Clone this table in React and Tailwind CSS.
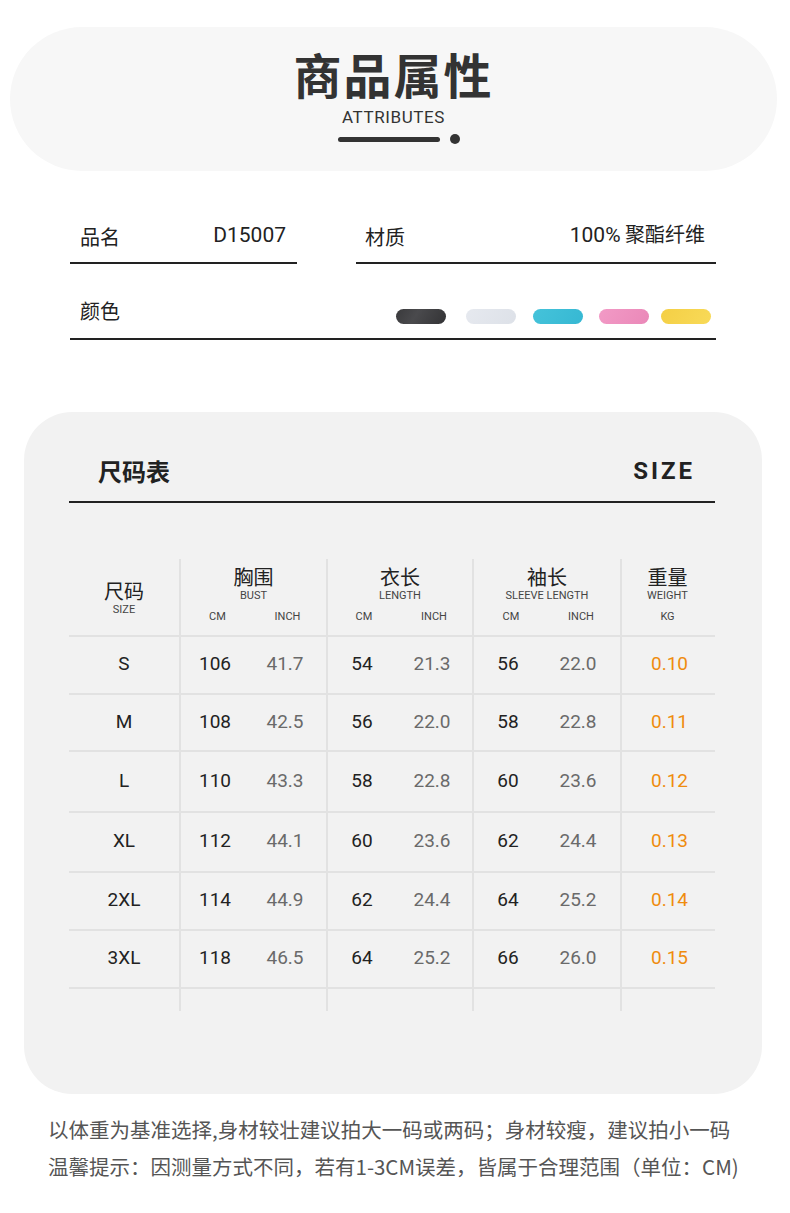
const cjk = { fontFamily: '"Noto Sans CJK SC", "Noto Sans", sans-serif' }
const din = { fontFamily: 'Roboto, "Noto Sans CJK SC", sans-serif' }

const rows = [
  { size: 'S', bust: ['106', '41.7'], length: ['54', '21.3'], sleeve: ['56', '22.0'], weight: '0.10', h: 'h-[58px]' },
  { size: 'M', bust: ['108', '42.5'], length: ['56', '22.0'], sleeve: ['58', '22.8'], weight: '0.11', h: 'h-[57px]' },
  { size: 'L', bust: ['110', '43.3'], length: ['58', '22.8'], sleeve: ['60', '23.6'], weight: '0.12', h: 'h-[61px]' },
  { size: 'XL', bust: ['112', '44.1'], length: ['60', '23.6'], sleeve: ['62', '24.4'], weight: '0.13', h: 'h-[60px]' },
  { size: '2XL', bust: ['114', '44.9'], length: ['62', '24.4'], sleeve: ['64', '25.2'], weight: '0.14', h: 'h-[58px]' },
  { size: '3XL', bust: ['118', '46.5'], length: ['64', '25.2'], sleeve: ['66', '26.0'], weight: '0.15', h: 'h-[58px]' },
]

// colour chips, with the left margin of each one
const swatches = [
  'ml-0 bg-[linear-gradient(120deg,#3a3a3c,#4a4a4d_40%,#333335)]',
  'ml-[20px] bg-[linear-gradient(120deg,#e6e9ef,#dde1e8)]',
  'ml-[17px] bg-[linear-gradient(120deg,#45c3da,#36b8d3)]',
  'ml-[16px] bg-[linear-gradient(120deg,#f29ac6,#ea88b8)]',
  'ml-[12px] bg-[linear-gradient(120deg,#f4cf45,#f8da58)]',
]

function Pair({ v }) {
  return (
    <div className="grid grid-cols-[68px_72px] items-center text-[19px]" style={din}>
      <div className="text-center text-[#222]">{v[0]}</div>
      <div className="text-center text-[#6a6a6a]">{v[1]}</div>
    </div>
  )
}

function HeadGroup({ cn, en }) {
  return (
    <div className="flex flex-col items-center pt-[6px]">
      <div className="text-[20px] leading-[24px] text-[#222]" style={cjk}>{cn}</div>
      <div className="text-[11px] leading-[14px] text-[#444]" style={din}>{en}</div>
      <div className="grid grid-cols-[68px_72px] mt-[6px] text-[11px] text-[#444]" style={din}>
        <div className="text-center">CM</div>
        <div className="text-center">INCH</div>
      </div>
    </div>
  )
}

export default function App() {
  return (
    <div className="w-[790px] bg-white pt-[27px] pb-[30px]" style={cjk}>
      {/* header banner */}
      <div className="ml-[10px] mr-[13px] h-[144px] rounded-full bg-[#f7f7f7] flex flex-col items-center pt-[20px]">
        <h1 className="text-[48px] leading-[52px] font-bold text-[#333] tracking-[2px]" style={cjk}>商品属性</h1>
        <div className="mt-[8px] text-[17px] leading-[20px] tracking-[0.6px] text-[#333]" style={din}>ATTRIBUTES</div>
        <div className="mt-[7px] flex items-center gap-[10px] ml-[10px]">
          <div className="w-[102px] h-[5px] rounded-full bg-[#333]"></div>
          <div className="w-[10px] h-[10px] rounded-full bg-[#333]"></div>
        </div>
      </div>

      {/* attributes */}
      <div className="ml-[70px] mr-[74px] mt-[48px]">
        <div className="flex justify-between">
          <div className="w-[227px] flex items-end justify-between border-b-2 border-[#222] pb-[10px] pl-[10px] pr-[11px]">
            <span className="text-[20px] text-[#222]">品名</span>
            <span className="text-[21px] text-[#222]" style={din}>D15007</span>
          </div>
          <div className="w-[360px] flex items-end justify-between border-b-2 border-[#222] pb-[10px] pl-[9px] pr-[11px]">
            <span className="text-[20px] text-[#222]">材质</span>
            <span className="text-[20px] text-[#222]"><span style={din} className="text-[21px]">100%</span> 聚酯纤维</span>
          </div>
        </div>
        <div className="flex items-center justify-between border-b-2 border-[#222] pt-[32px] pb-[12px] pl-[10px]">
          <span className="text-[20px] text-[#222]">颜色</span>
          <div className="flex mr-[5px] mt-[12px]">
            {swatches.map((s, i) => (
              <div key={i} className={`w-[50px] h-[15px] rounded-full ${s}`}></div>
            ))}
          </div>
        </div>
      </div>

      {/* size card */}
      <div className="ml-[24px] mr-[28px] mt-[72px] h-[682px] rounded-[48px] bg-[#f2f2f2] pl-[45px] pr-[47px] pt-[41px]">
        <div className="flex items-center justify-between border-b-2 border-[#222] pb-[12px] pl-[29px] pr-[20px]">
          <span className="text-[24px] font-bold text-[#222]">尺码表</span>
          <span className="text-[24px] font-bold tracking-[3px] text-[#222]" style={{ fontFamily: 'Roboto, sans-serif' }}>SIZE</span>
        </div>

        <div className="mt-[56px]">
          <div className="grid grid-cols-[112px_147px_146px_148px_91px] h-[78px] border-b-2 border-[#e2e2e2]">
            <div className="flex flex-col items-center justify-center pt-[2px] border-r-2 border-[#e2e2e2]">
              <div className="text-[20px] leading-[24px] text-[#222]">尺码</div>
              <div className="text-[11px] leading-[14px] text-[#444]" style={din}>SIZE</div>
            </div>
            <div className="border-r-2 border-[#e2e2e2]"><HeadGroup cn="胸围" en="BUST" /></div>
            <div className="border-r-2 border-[#e2e2e2]"><HeadGroup cn="衣长" en="LENGTH" /></div>
            <div className="border-r-2 border-[#e2e2e2]"><HeadGroup cn="袖长" en="SLEEVE LENGTH" /></div>
            <div className="flex flex-col items-center pt-[6px]">
              <div className="text-[20px] leading-[24px] text-[#222]">重量</div>
              <div className="text-[11px] leading-[14px] text-[#444]" style={din}>WEIGHT</div>
              <div className="mt-[6px] text-[11px] text-[#444]" style={din}>KG</div>
            </div>
          </div>

          {rows.map((r) => (
            <div key={r.size} className={`grid grid-cols-[112px_147px_146px_148px_91px] ${r.h} border-b-2 border-[#e2e2e2]`}>
              <div className="flex items-center justify-center border-r-2 border-[#e2e2e2] text-[19px] text-[#222]" style={din}>{r.size}</div>
              <div className="flex items-center border-r-2 border-[#e2e2e2]"><Pair v={r.bust} /></div>
              <div className="flex items-center border-r-2 border-[#e2e2e2]"><Pair v={r.length} /></div>
              <div className="flex items-center border-r-2 border-[#e2e2e2]"><Pair v={r.sleeve} /></div>
              <div className="flex items-center justify-center pl-[4px] text-[19px] text-[#ef8c0e]" style={din}>{r.weight}</div>
            </div>
          ))}
          <div className="grid grid-cols-[112px_147px_146px_148px_91px] h-[22px]">
            <div className="border-r-2 border-[#e2e2e2]"></div>
            <div className="border-r-2 border-[#e2e2e2]"></div>
            <div className="border-r-2 border-[#e2e2e2]"></div>
            <div className="border-r-2 border-[#e2e2e2]"></div>
            <div></div>
          </div>
        </div>
      </div>

      {/* notes */}
      <div className="pl-[48px] mt-[17px] text-[20.5px] leading-[37px] text-[#555]">
        <p>以体重为基准选择,身材较壮建议拍大一码或两码；身材较瘦，建议拍小一码</p>
        <p>温馨提示：因测量方式不同，若有1-3CM误差，皆属于合理范围（单位：CM)</p>
      </div>
    </div>
  )
}
